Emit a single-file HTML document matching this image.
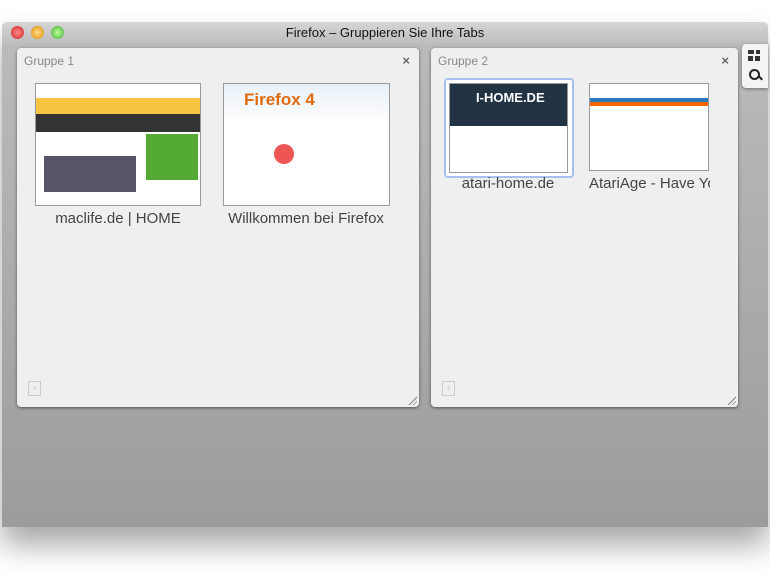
<!DOCTYPE html>
<html><head><style>
body{margin:0;width:770px;height:578px;background:#fff;position:relative;overflow:hidden;font-family:"Liberation Sans",sans-serif}
.win{position:absolute;left:2px;top:22px;width:766px;height:505px;background:linear-gradient(#bcbcbc,#9c9c9c);box-shadow:0 18px 30px rgba(0,0,0,.35);border-radius:5px 5px 0 0}
.tb{position:absolute;left:0;top:0;width:766px;height:22px;background:linear-gradient(#d6d6d6,#bdbdbd);border-radius:5px 5px 0 0;text-align:center;font-size:13px;line-height:22px;color:#111}
.l{position:absolute;top:4px;width:13px;height:13px;border-radius:50%}
.grp{position:absolute;background:#efefef;border-radius:4px;box-shadow:0 1px 3px rgba(0,0,0,.5)}
.gt{position:absolute;left:7px;top:6px;font-size:12px;color:#888}
.x{position:absolute;right:9px;top:5px;font-size:13px;color:#666;font-weight:bold}
.th{position:absolute;border:1px solid #999;background:#fff;overflow:hidden}
.cap{position:absolute;font-size:15px;color:#444;text-align:center;white-space:nowrap;overflow:hidden}
.rs{position:absolute;right:2px;bottom:2px;width:10px;height:10px;background:repeating-linear-gradient(135deg,transparent 0 2px,#888 2px 3px);clip-path:polygon(100% 0,100% 100%,0 100%)}
.np{position:absolute;left:11px;bottom:11px;width:11px;height:13px;border:1px solid #ccc;color:#ccc;font-size:9px;text-align:center;line-height:13px}
</style></head><body>
<div class="win">
<div class="tb">Firefox – Gruppieren Sie Ihre Tabs
<div class="l" style="left:9px;background:radial-gradient(#f88,#c22)"></div>
<div class="l" style="left:29px;background:radial-gradient(#fd8,#d80)"></div>
<div class="l" style="left:49px;background:radial-gradient(#bf9,#4a3)"></div>
</div>
<div style="position:absolute;right:0;top:22px;width:26px;height:44px;background:#f4f4f4;border-radius:4px 0 0 4px;box-shadow:0 1px 3px rgba(0,0,0,.4)">
<div style="position:absolute;left:6px;top:6px;width:6px;height:4px;background:#333"></div><div style="position:absolute;left:14px;top:6px;width:4px;height:4px;background:#333"></div>
<div style="position:absolute;left:6px;top:12px;width:5px;height:5px;background:#333"></div><div style="position:absolute;left:13px;top:12px;width:5px;height:5px;background:#333"></div>
<div style="position:absolute;left:7px;top:25px;width:7px;height:7px;border:2px solid #222;border-radius:50%"></div>
<div style="position:absolute;left:16px;top:33px;width:5px;height:2px;background:#222;transform:rotate(45deg)"></div>
</div>
</div>
<div class="grp" style="left:17px;top:48px;width:402px;height:359px">
<div class="gt">Gruppe 1</div><div class="x">×</div>
<div class="th" style="left:18px;top:35px;width:164px;height:121px;background:linear-gradient(#fff 0 14px,#f5c542 14px 30px,#333 30px 48px,#fff 48px)">
<div style="position:absolute;left:8px;top:72px;width:92px;height:36px;background:#556"></div>
<div style="position:absolute;left:110px;top:50px;width:52px;height:46px;background:#5a3"></div></div>
<div class="cap" style="left:18px;top:162px;width:166px">maclife.de | HOME</div>
<div class="th" style="left:206px;top:35px;width:165px;height:121px;background:linear-gradient(#e8f0f8,#fff 40px)">
<div style="position:absolute;left:20px;top:6px;font-size:17px;color:#e06a10;font-weight:bold">Firefox 4</div>
<div style="position:absolute;left:50px;top:60px;width:20px;height:20px;border-radius:50%;background:#e55"></div></div>
<div class="cap" style="left:200px;top:162px;width:178px">Willkommen bei Firefox</div>
<div class="np">+</div><div class="rs"></div>
</div>
<div class="grp" style="left:431px;top:48px;width:307px;height:359px">
<div class="gt">Gruppe 2</div><div class="x">×</div>
<div style="position:absolute;left:13px;top:30px;width:126px;height:96px;border:2px solid #a8c0f0;border-radius:4px;background:#fff"></div>
<div class="th" style="left:18px;top:35px;width:117px;height:88px;background:linear-gradient(#234 0 42px,#fff 42px)">
<div style="position:absolute;left:26px;top:6px;font-size:13px;color:#fff;font-weight:bold">I-HOME.DE</div></div>
<div class="cap" style="left:14px;top:127px;width:126px">atari-home.de</div>
<div class="th" style="left:158px;top:35px;width:118px;height:86px;background:linear-gradient(#fff 0 14px,#2a7ac0 14px 18px,#f60 18px 22px,#fff 22px)"></div>
<div class="cap" style="left:158px;top:127px;width:121px;text-align:left">AtariAge - Have You</div>
<div class="np">+</div><div class="rs"></div>
</div>
</body></html>
